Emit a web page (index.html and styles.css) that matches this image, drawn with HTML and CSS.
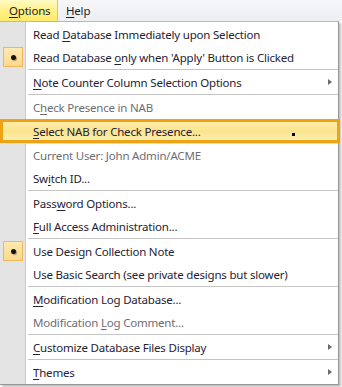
FILE: index.html
```html
<!DOCTYPE html>
<html>
<head>
<meta charset="utf-8">
<link rel="stylesheet" href="styles.css">
</head>
<body>
<div class="screen">
  <div class="menubar">
    <span class="mb-item active"><u>O</u>ptions</span>
    <span class="mb-item"><u>H</u>elp</span>
  </div>
  <div class="menu">
    <div class="item">Read <u>D</u>atabase Immediately upon Selection</div>
    <div class="item checked"><span class="check"><span class="dot"></span></span>Read Database <u>o</u>nly when 'Apply' Button is Clicked</div>
    <div class="sep"></div>
    <div class="item sub"><u>N</u>ote Counter Column Selection Options<span class="arrow"></span></div>
    <div class="sep"></div>
    <div class="item disabled">C<u>h</u>eck Presence in NAB</div>
    <div class="item selected"><u>S</u>elect NAB for Check Presence...<span class="cursor"></span></div>
    <div class="item disabled">Current User: John Admin/ACME</div>
    <div class="item">Sw<u>i</u>tch ID...</div>
    <div class="sep"></div>
    <div class="item">Pass<u>w</u>ord Options...</div>
    <div class="item"><u>F</u>ull Access Administration...</div>
    <div class="sep"></div>
    <div class="item checked"><span class="check"><span class="dot"></span></span>Use Design Collection Note</div>
    <div class="item">Use Basic Search (see private designs but slower)</div>
    <div class="sep"></div>
    <div class="item"><u>M</u>odification Log Database...</div>
    <div class="item disabled">Modification <u>L</u>og Comment...</div>
    <div class="sep"></div>
    <div class="item sub"><u>C</u>ustomize Database Files Display<span class="arrow"></span></div>
    <div class="sep"></div>
    <div class="item sub"><u>T</u>hemes<span class="arrow"></span></div>
  </div>
  <div class="annot"></div>
</div>
</body>
</html>
```

FILE: styles.css
```css
html, body {
  margin: 0;
  padding: 0;
  background: #ffffff;
}
.screen {
  position: relative;
  width: 342px;
  height: 387px;
  overflow: hidden;
  font-family: "Noto Sans", "Open Sans", sans-serif;
  font-size: 11.5px;
  letter-spacing: -0.2px;
  color: #262233;
}
u {
  text-decoration: underline;
  text-underline-offset: 2px;
  text-decoration-thickness: 1px;
}
.menubar {
  height: 21px;
  display: flex;
  align-items: stretch;
  background: linear-gradient(#f6f7f9, #eceef1);
}
.mb-item {
  display: flex;
  align-items: center;
  padding: 0 8px 0 9px;
  color: #1e1e1e;
}
.mb-item.active {
  width: 40px;
  background: linear-gradient(#fffbc4, #fff07e 60%, #ffe96a);
  border-right: 1px solid #d9c96a;
  box-sizing: content-box;
}
.mb-item + .mb-item {
  padding-left: 8px;
}
.menu {
  width: 338px;
  border-top: 1px solid #b8b8b8;
  border-right: 1px solid #979797;
  border-bottom: 1px solid #979797;
  padding-top: 1px;
  background: linear-gradient(to right, #e4e4e4 0, #e4e4e4 25px, #c9c9c9 25px, #c9c9c9 26px, #ffffff 26px);
  box-shadow: 2px 2px 2px rgba(0,0,0,0.25);
}
.item {
  position: relative;
  height: 23px;
  line-height: 23px;
  padding-left: 33px;
  white-space: nowrap;
}
.item.disabled {
  color: #6e6d75;
}
.item.selected {
  height: 25px;
  line-height: 25px;
  background: linear-gradient(#fdf0b4, #fbe48c 50%, #fdf3c6);
  box-shadow: inset 0 0 0 1px #f2df9a;
}
.sep {
  height: 1px;
  margin: 0 0 1px 28px;
  background: #c5c5c5;
}
.check {
  position: absolute;
  left: 3px;
  top: 1px;
  width: 18px;
  height: 18px;
  border: 1px solid #f2b75a;
  background: linear-gradient(#fde9b0, #fcd98d);
  display: flex;
  align-items: center;
  justify-content: center;
}
.dot {
  width: 5px;
  height: 5px;
  border-radius: 50%;
  background: #111;
  box-shadow: 1px 1px 1px rgba(0,0,0,0.35);
}
.arrow {
  position: absolute;
  right: 6px;
  top: 8px;
  width: 0;
  height: 0;
  border-top: 3.5px solid transparent;
  border-bottom: 3.5px solid transparent;
  border-left: 4px solid #6a6a6a;
}
.cursor {
  position: absolute;
  left: 292px;
  top: 14px;
  width: 3px;
  height: 3px;
  background: #000;
}
.annot {
  position: absolute;
  left: 0;
  top: 119px;
  width: 334px;
  height: 18px;
  border: 3px solid #eda414;
}
```
